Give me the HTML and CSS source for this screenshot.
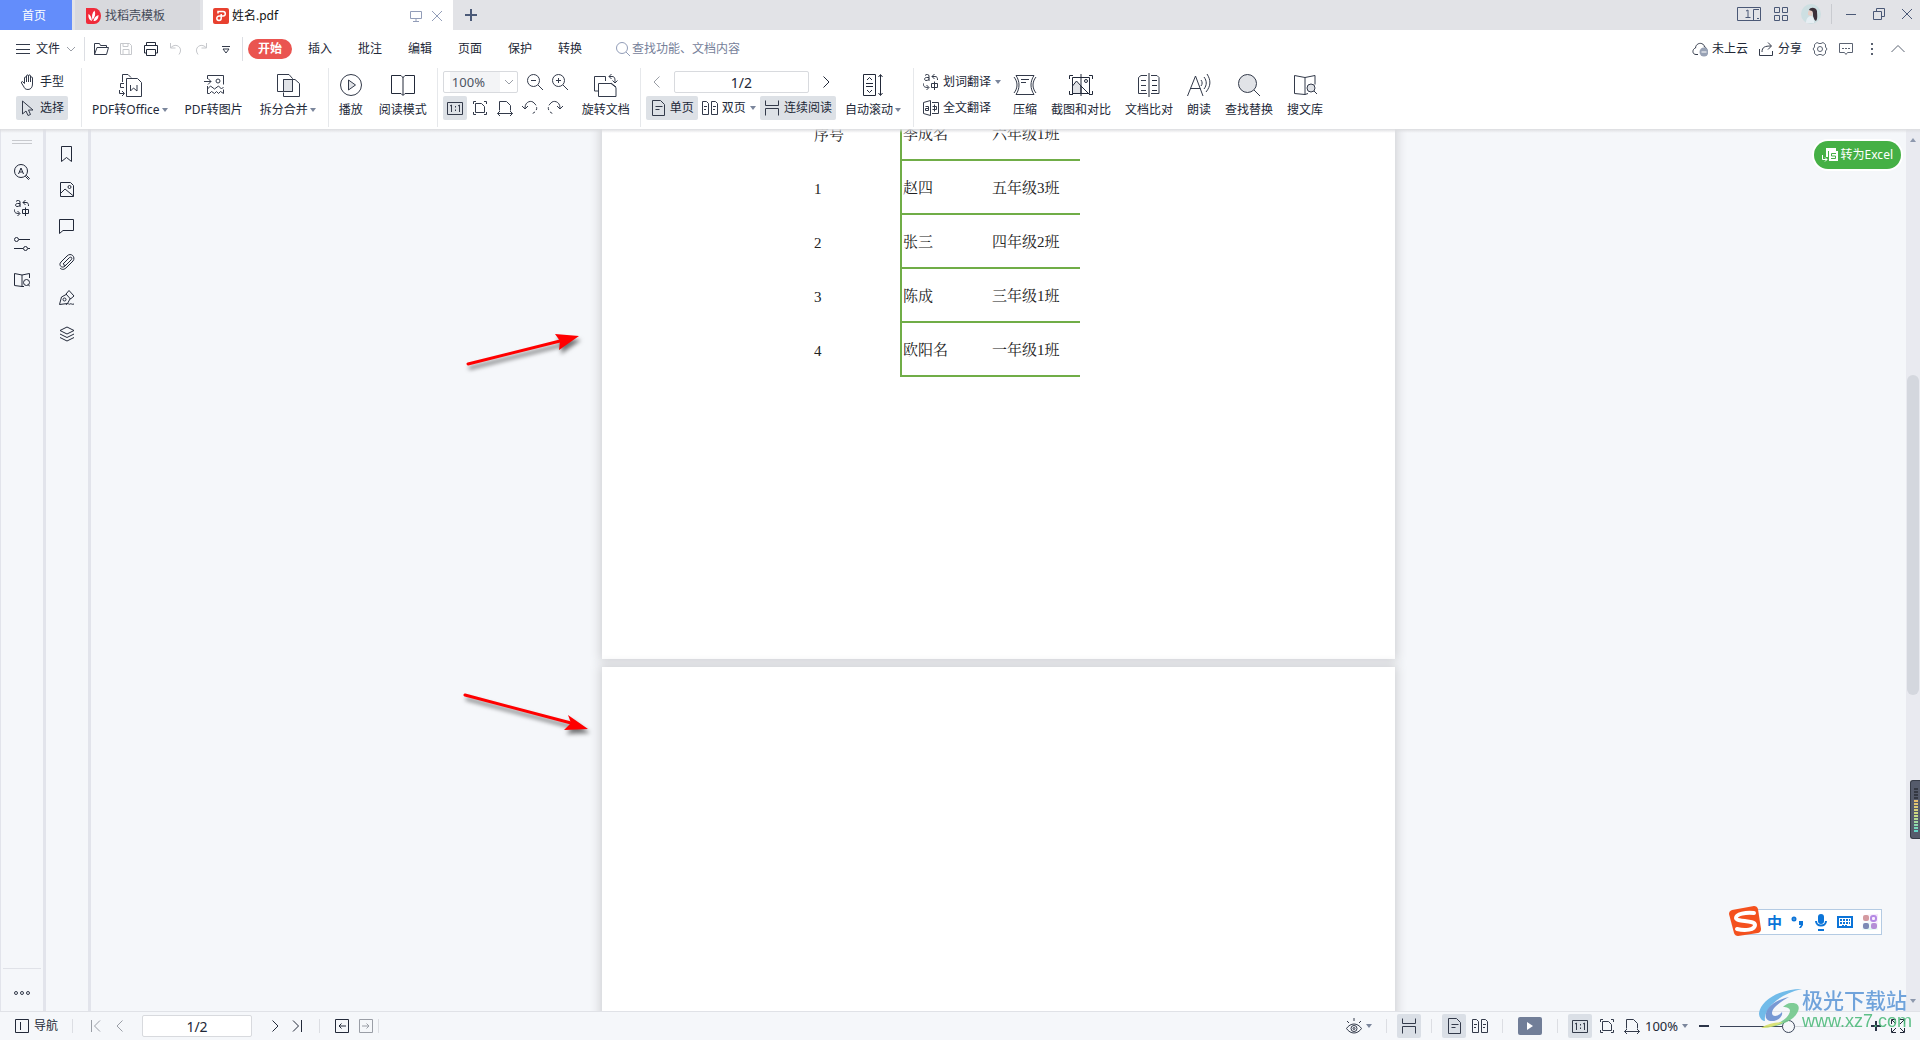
FILE: index.html
```html
<!DOCTYPE html>
<html lang="zh-CN">
<head>
<meta charset="utf-8">
<title>姓名.pdf</title>
<link rel="stylesheet" href="styles.css">
</head>
<body>
<svg class="sprite" aria-hidden="true">
  <symbol id="caret" viewBox="0 0 6 16"><path class="caret-fill" d="M0 6h6L3 10z"/></symbol>
  <symbol id="chev-down" viewBox="0 0 10 16"><path d="M1 6l4 4 4-4"/></symbol>
  <symbol id="chev-left" viewBox="0 0 10 16"><path d="M7.500 2.500L2 8l5.500 5.500"/></symbol>
  <symbol id="chev-right" viewBox="0 0 10 16"><path d="M2.500 2.500L8 8l-5.500 5.500"/></symbol>
  <symbol id="first" viewBox="0 0 10 16"><path d="M.5 2v12M9 2.500L3.500 8 9 13.500"/></symbol>
  <symbol id="last" viewBox="0 0 10 16"><path d="M9.500 2v12M1 2.500L6.500 8 1 13.500"/></symbol>
  <symbol id="one" viewBox="0 0 16 16"><path d="M.5 2.500h15v12H.5zM3 6l1.500-1v7M11 6l1.500-1v7M8.500 6v1.500M8.500 9.500V11"/></symbol>
  <symbol id="fit" viewBox="0 0 16 16"><path d="M1.500 4V1.500H4M12 1.500h2.500V4M14.500 12v2.500H12M4 14.500H1.500V12M3.500 3.500h6l3 3v6h-9z"/></symbol>
  <symbol id="fitw" viewBox="0 0 16 16"><path d="M2.500 10.500v-9h7l4 4v5M.5 13.500h15M3 11l-2.500 2.500L3 16M13 11l2.500 2.500L13 16"/></symbol>
  <symbol id="single" viewBox="0 0 16 16"><path d="M2.500.500h8l4 4v11h-12zM5.500 6.500h7M5.500 9.500h4"/></symbol>
  <symbol id="double" viewBox="0 0 16 16"><path d="M.5 1.500h4l2 2v11h-6zM9.500 1.500h4l2 2v11h-6zM2 6.500h3M2 9.500h2M11 6.500h3M11 9.500h2"/></symbol>
  <symbol id="cont" viewBox="0 0 16 16"><path d="M1.500.500v5h13v-5M1.500 15.500v-7h13v7"/></symbol>
  <symbol id="trans" viewBox="0 0 16 16"><path d="M2 1.500C3 0 6 0 6 2v5M6 3.500H3.500C1 3.500 1 6.500 3 6.500s3-1 3-2M9 2.500h3c2 0 2.500 1 2.500 3.500M11.500 0L9 2.500 11.500 5M.5 9.500v1c0 2 1 3 5 3M3.500 11L6 13.500 3.500 16M8.500 9.500h6v4h-6zM11.500 7.500v8.500"/></symbol>
  <symbol id="book" viewBox="0 0 24 24"><path d="M12 4.500L1.500 2.500v18L12 21.500zM12 4.500l10-2v9M12 21.500l3-1"/><circle class="tint" cx="18" cy="15" r="4"/><path d="M21 18l3 3"/></symbol>
</svg>

<header class="titlebar">
  <nav class="tabs">
    <a class="tab tab-home" href="#">首页</a>
    <a class="tab tab-docer" href="#">
      <svg width="16" height="16" viewBox="0 0 16 16"><path fill="#f02b3a" d="M0 0h8a7 8 0 010 16H2a2 2 0 01-2-2z"/><path fill="#fff" d="M6 13C3 12 2 9 2.500 6 4.500 7 5.500 9 6 13zM6.500 12C5.500 8 6 5 8.500 2.500 10 6 9 9 6.500 12zM7.500 13c.5-3 2-5 5-6 0 4-2 6-5 6z"/></svg>
      <span>找稻壳模板</span>
    </a>
    <a class="tab tab-file" href="#">
      <svg width="16" height="16" viewBox="0 0 16 16"><rect width="16" height="16" rx="2" fill="#e8402f"/><path fill="none" stroke="#fff" stroke-width="1.500" d="M5 5.500V3.500h5a2.300 2.300 0 010 4.600H6a2.200 2.200 0 102.200 2.200V6"/></svg>
      <span>姓名.pdf</span>
      <svg class="ico blue push" width="12" height="16" viewBox="0 0 12 16"><path d="M.5 3.500h11v7H.5zM6 10.500v3M3 13.500h6"/></svg>
      <svg class="ico blue" width="12" height="16" viewBox="0 0 12 16"><path d="M1 3l10 10M11 3L1 13"/></svg>
    </a>
    <button class="plain plus" aria-label="新建"><svg width="12" height="12" viewBox="0 0 12 12"><path stroke="#4b5a78" stroke-width="2" d="M6 0v12M0 6h12"/></svg></button>
  </nav>
  <div class="window-tools">
    <svg class="ico navy" width="24" height="14" viewBox="0 0 24 14"><path d="M.5.500h23v13H.5zM9 4l2-1v8M8.500 10.500h5M22 2.500h-5.500v11M20 11.500h2"/></svg>
    <svg class="ico navy" width="14" height="14" viewBox="0 0 14 14"><path d="M.5.500h5v5h-5zM8.500.500h5v5h-5zM.5 8.500h5v5h-5zM8.500 8.500h5v5h-5z"/></svg>
    <svg width="20" height="20" viewBox="0 0 20 20"><circle cx="10" cy="10" r="10" fill="#cddfe2"/><path fill="#e9cfc6" d="M7 9c0-3 3-4 5-2l-1 5-4-1z"/><path fill="#3a2f38" d="M8 6c1-3 7-3 8 1 0 3 1 8-1 10-2-1-3-4-3-6s0-3-1-4z"/><path fill="#e6eef3" d="M5 19c0-4 2-7 5-7s3 4 3 7z"/></svg>
    <i class="bar"></i>
    <svg class="ico navy" width="12" height="14" viewBox="0 0 12 14"><path d="M1 7.500h10"/></svg>
    <svg class="ico navy" width="12" height="14" viewBox="0 0 12 14"><path d="M.5 4.500h8v8h-8zM3.500 4V1.500h8v8H9"/></svg>
    <svg class="ico navy" width="12" height="14" viewBox="0 0 12 14"><path d="M1 2l10 10M11 2L1 12"/></svg>
  </div>
</header>

<div class="menubar">
  <button class="plain file-menu">
    <svg class="ico" width="14" height="16" viewBox="0 0 14 16"><path d="M0 3.500h14M0 8.500h14M0 12.500h14"/></svg>
    <span>文件</span>
    <svg class="ico gray" width="10" height="16"><use href="#chev-down"/></svg>
  </button>
  <i class="bar"></i>
  <div class="quick">
    <svg class="ico" width="16" height="16" viewBox="0 0 16 16"><path d="M1.500 13.500v-11h5l1 2h6v2M1.500 13.500l2.500-7h11.500l-2 7z"/></svg>
    <svg class="ico off" width="16" height="16" viewBox="0 0 16 16"><path d="M2.500 2.500h9l2 2v9h-11zM5 2.500v3h5v-3M5 13.500v-5h6v5"/></svg>
    <svg class="ico dark" width="16" height="16" viewBox="0 0 16 16"><path d="M3.500 4V1.500h9V4M3.500 12h-2v-7.500h13V12h-2M3.500 8.500h9v6h-9z"/></svg>
    <svg class="ico off" width="16" height="16" viewBox="0 0 16 16"><path d="M2.500 2v5h5M3 6.500C8 1 16 7 11 13.500"/></svg>
    <svg class="ico off" width="16" height="16" viewBox="0 0 16 16"><path d="M13.500 2v5h-5M13 6.500C8 1 0 7 5 13.500"/></svg>
    <svg class="ico" width="16" height="16" viewBox="0 0 16 16"><path d="M4 5.500h8M5 8l3 4 3-4z"/></svg>
  </div>
  <i class="bar"></i>
  <nav class="menu">
    <a class="active" href="#">开始</a><a href="#">插入</a><a href="#">批注</a><a href="#">编辑</a><a href="#">页面</a><a href="#">保护</a><a href="#">转换</a>
  </nav>
  <label class="search">
    <svg class="ico blue" width="16" height="16" viewBox="0 0 16 16"><circle cx="7" cy="7" r="5.500"/><path d="M11 11l4 4"/></svg>
    <input type="text" placeholder="查找功能、文档内容" aria-label="查找功能、文档内容">
  </label>
  <div class="account">
    <button class="plain"><svg class="ico" width="16" height="16" viewBox="0 0 16 16"><path d="M6 13.500H4C0 13.500 0 8 3.500 7 4 1 12 1 12.500 6c1 0 2 1 2 2"/><circle cx="12" cy="11" r="4.500" fill="#98a2b5" stroke="none"/><path stroke="#fff" d="M9.500 11h5"/></svg>未上云</button>
    <button class="plain"><svg class="ico" width="16" height="16" viewBox="0 0 16 16"><path d="M1.500 8v6.500h13V10M4 11c0-5 3-6 9-6M10 1.500L13.500 5 10 8.500"/></svg>分享</button>
    <svg class="ico mid" width="16" height="16" viewBox="0 0 16 16"><path d="M5 1.500l2 1h2l2-1 2.500 2V6L15 8l-1.500 2v2.500l-2.500 2-2-1H7l-2 1-2.500-2V10L1 8l1.500-2V3.500z"/><circle cx="8" cy="8" r="2.500"/></svg>
    <svg class="ico mid" width="16" height="16" viewBox="0 0 16 16"><path d="M1.500 2.500h13v9h-5l-1.500 2-1.500-2h-5zM4 7.500h2M7 7.500h2M10 7.500h2"/></svg>
    <svg width="16" height="16" viewBox="0 0 16 16"><path fill="#596170" d="M7 2h2v2H7zM7 7h2v2H7zM7 12h2v2H7z"/></svg>
    <svg class="ico mid" width="16" height="16" viewBox="0 0 16 16"><path d="M1.500 11L8 4.500l6.500 6.500"/></svg>
  </div>
</div>

<div class="ribbon">
  <section class="group g-tools">
    <div class="stack">
      <button class="small"><svg class="ico" width="16" height="16" viewBox="0 0 16 16"><path d="M4.500 9.500V4c0-1.500 2-1.500 2 0V2c0-1.500 2-1.500 2 0v0c0-1.500 2-1.500 2 0v2c0-1.500 2-1.500 2 0v6c0 3-1.500 5.500-4.500 5.500S4.500 14 4 13L1.500 9c-.5-1.500 1-2 1.500-1zM6.500 4v4M8.500 2v6M10.500 4v4"/></svg>手型</button>
      <button class="small on"><svg class="ico" width="16" height="16" viewBox="0 0 16 16"><path d="M2.500 1v13l3.500-3 2 4.500 2.500-1-2-4.500H13z"/></svg>选择</button>
    </div>
  </section>
  <section class="group g-convert">
    <button class="big"><svg class="ico" width="24" height="24" viewBox="0 0 24 24"><path d="M4.500 9V1.500H10l3 3M8.500 5.500v18h15v-14l-4-4zM12.500 12v6l3-3 3.500 3v-6M6 10.500H2.500v4H6M1.500 17v3.500H6M4 18l2.500 2.500L4 23"/></svg><span>PDF转Office<svg class="ico" width="6" height="16"><use href="#caret"/></svg></span></button>
    <button class="big"><svg class="ico" width="24" height="24" viewBox="0 0 24 24"><path d="M5.500 6V2.500h16v9M5.500 13v7.500h2l2-2 3 2 2-2 2 2 2-2 3 2v-4M5.500 16l3-3 4 3 4-3 3 3 2-2M2 8.500h7M6 5.500l3 3-3 3"/><circle cx="16" cy="8" r="2"/></svg><span>PDF转图片</span></button>
    <button class="big"><svg class="ico" width="24" height="24" viewBox="0 0 24 24"><path d="M7.500 18.500h-6v-17H13l3.500 4v13h-9v-12H19l4.500 4v13h-16v-4"/><path class="tint" d="M7.500 6.500h9v12h-9z"/></svg><span>拆分合并<svg class="ico" width="6" height="16"><use href="#caret"/></svg></span></button>
  </section>
  <section class="group g-view">
    <button class="big"><svg class="ico" width="24" height="24" viewBox="0 0 24 24"><circle cx="12" cy="12" r="10.500"/><path class="tint" d="M9.500 7v10l7-5z"/></svg><span>播放</span></button>
    <button class="big"><svg class="ico dark" width="24" height="24" viewBox="0 0 24 24"><path d="M.5 2.500H10l2 2 2-2h9.500v18H14l-2 2-2-2H.5zM12 4v18"/></svg><span>阅读模式</span></button>
  </section>
  <section class="group g-zoom">
    <div class="stack">
      <div class="row zoom-row">
        <span class="zoom-pick"><select aria-label="缩放比例"><option>100%</option></select><svg class="ico gray" width="10" height="16"><use href="#chev-down"/></svg></span>
        <svg class="ico" width="16" height="16" viewBox="0 0 16 16"><circle cx="6.500" cy="6.500" r="6"/><path d="M11 11l5 5M4 6.500h5"/></svg>
        <svg class="ico" width="16" height="16" viewBox="0 0 16 16"><circle cx="6.500" cy="6.500" r="6"/><path d="M11 11l5 5M4 6.500h5M6.500 4v5"/></svg>
      </div>
      <div class="row zoom-row">
        <button class="small on" aria-label="实际大小"><svg class="ico" width="16" height="16"><use href="#one"/></svg></button>
        <svg class="ico" width="16" height="16"><use href="#fit"/></svg>
        <svg class="ico" width="16" height="16"><use href="#fitw"/></svg>
        <svg class="ico" width="16" height="16" viewBox="0 0 16 16"><path d="M0 6l3 3 3-3M3 8c0-7 7-8 9-5"/><path stroke-dasharray="3 2" d="M12 3c4 3 4 9-3 11"/></svg>
        <svg class="ico" width="16" height="16" viewBox="0 0 16 16"><path d="M16 6l-3 3-3-3M13 8c0-7-7-8-9-5"/><path stroke-dasharray="3 2" d="M4 3c-4 3-4 9 3 11"/></svg>
      </div>
    </div>
    <button class="big"><svg class="ico" width="24" height="24" viewBox="0 0 24 24"><path d="M4.500 18H.5V3.500h11M4.500 23.500v-13H17l5 4v9zM17 10l5 4M11.500 8V3.500M15 3.500h3c3 0 3 2 3 6M17.500 1L15 3.500 17.500 6M18.500 7.500L21 10l2.500-2.500"/></svg><span>旋转文档</span></button>
  </section>
  <section class="group g-page">
    <div class="stack">
      <div class="row page-row">
        <svg class="ico gray" width="10" height="16"><use href="#chev-left"/></svg>
        <input class="page-input" type="text" value="1/2" aria-label="页码">
        <svg class="ico dark" width="10" height="16"><use href="#chev-right"/></svg>
      </div>
      <div class="row">
        <button class="small on"><svg class="ico" width="16" height="16"><use href="#single"/></svg>单页</button>
        <button class="small flat"><svg class="ico" width="16" height="16"><use href="#double"/></svg>双页<svg class="ico" width="6" height="16"><use href="#caret"/></svg></button>
        <button class="small on"><svg class="ico" width="16" height="16"><use href="#cont"/></svg>连续阅读</button>
      </div>
    </div>
    <button class="big"><svg class="ico dark" width="24" height="24" viewBox="0 0 24 24"><path d="M2.500 1.500h12v21h-12zM6 7l2.500-2.500L11 7M6 17l2.500 2.500L11 17M5 10.500h7M5 13.500h7M19.500 2v20M17.500 4l2-2.500 2 2.500M17.500 20l2 2.500 2-2.500"/></svg><span>自动滚动<svg class="ico" width="6" height="16"><use href="#caret"/></svg></span></button>
  </section>
  <section class="group g-text">
    <div class="stack">
      <button class="small flat"><svg class="ico" width="16" height="16"><use href="#trans"/></svg>划词翻译<svg class="ico" width="6" height="16"><use href="#caret"/></svg></button>
      <button class="small flat"><svg class="ico" width="16" height="16" viewBox="0 0 16 16"><path d="M.5 2.500l7-2v15l-7-2zM9 2.500h6.500v11H9M2.500 6.500h3v4h-3v-2h3M9.500 6.500h4v3h-4M11.500 4.500v7"/></svg>全文翻译</button>
    </div>
    <button class="big"><svg class="ico" width="24" height="24" viewBox="0 0 24 24"><path d="M3 2.500h18c-4 6-4 13 0 19H3c4-6 4-13 0-19zM1 4c4 5 4 11 0 16M23 4c-4 5-4 11 0 16M8 6.500h8M8 9.500h5"/></svg><span>压缩</span></button>
    <button class="big"><svg class="ico dark" width="24" height="24" viewBox="0 0 24 24"><path class="tint" d="M3.500 13l4-5L12 13v7.500H3.500z"/><path d="M.5 6V2.500H4M20 2.500h3.500V6M23.500 18v3.500H20M4 21.500H.5V18M3.500 4.500h17v16h-17zM12 1v22M12 13l7 7"/><circle cx="17" cy="8" r="1.500"/></svg><span>截图和对比</span></button>
    <button class="big"><svg class="ico" width="24" height="24" viewBox="0 0 24 24"><path d="M10 2.500H4l-2.500 2v16H10M14 2.500h6l2 2v16h-8M4 7.500h5M4 12.500h5M4 17.500h5"/><path class="dark" d="M12 0v24M15 7.500h5M15 12.500h5M15 17.500h5"/></svg><span>文档比对</span></button>
    <button class="big"><svg class="ico" width="24" height="24" viewBox="0 0 24 24"><path d="M.5 23L8.500 3 16 23M3 15.500h10.500M14 7c1.500 2 1.500 4 0 6M17 4c3 4 3 8 0 12M20 1c4 6 4 12-1 18"/></svg><span>朗读</span></button>
    <button class="big"><svg class="ico" width="24" height="24" viewBox="0 0 24 24"><circle class="tint" cx="10.500" cy="10.500" r="9"/><path d="M17 17l6 6"/></svg><span>查找替换</span></button>
    <button class="big"><svg class="ico" width="24" height="24"><use href="#book"/></svg><span>搜文库</span></button>
  </section>
</div>

<main class="workspace">
  <aside class="rail rail-tools">
    <i class="grip"></i>
    <svg class="ico dark" width="16" height="16" viewBox="0 0 16 16"><circle cx="7" cy="7" r="6.500"/><path d="M4.500 10L7 4l2.500 6M5.500 8h3M11.500 12.500l1-1 3 3-1 1z"/></svg>
    <svg class="ico dark" width="16" height="16"><use href="#trans"/></svg>
    <svg class="ico dark" width="16" height="16" viewBox="0 0 16 16"><circle cx="2.500" cy="3.500" r="2"/><circle cx="11.500" cy="12.500" r="2"/><path d="M5 3.500h11M0 12.500h9M14 12.500h2"/></svg>
    <svg class="ico dark" width="16" height="16" viewBox="0 0 16 16"><path d="M8 3L.5 1.500v12L8 14.500zM8 3l7.500-1.500V6M8 14.500h2"/><circle cx="12.500" cy="10.500" r="3"/><path d="M14 12.500l2 2"/></svg>
    <div class="more"><svg class="ico" width="16" height="16" viewBox="0 0 16 16"><circle cx="2" cy="8" r="1.500"/><circle cx="8" cy="8" r="1.500"/><circle cx="14" cy="8" r="1.500"/></svg></div>
  </aside>
  <aside class="rail rail-panels">
    <svg class="ico dark" width="16" height="16" viewBox="0 0 16 16"><path d="M2.500.500h10v15l-5-4-5 4z"/></svg>
    <svg class="ico dark" width="16" height="16" viewBox="0 0 16 16"><path d="M1.500.500h10l3 3v11h-13zM2 11l4-4 8.500 7"/><circle cx="10.500" cy="5" r="1.500"/></svg>
    <svg class="ico dark" width="16" height="16" viewBox="0 0 16 16"><path d="M.5 1.500h14v11H4l-3.500 3z"/></svg>
    <svg class="ico dark" width="16" height="16" viewBox="0 0 16 16"><path d="M4 10l6-6c2-2 4 0 2 2l-6 6c-3 3-7-1-4-4l6-6c4-4 9 1 6 5l-6 6c-3 3-5 3-7 1M5 10c-1 2 1 2 2 1l5-5"/></svg>
    <svg class="ico dark" width="16" height="16" viewBox="0 0 16 16"><path d="M7 4l3-3.500L15 6l-3.500 3zM8 4L2.500 7l-2 7.500 8-1L11.500 8"/><circle cx="5.500" cy="9.500" r="1.500"/><path d="M7 15c2-3 3 0 4-1s2 1 4 0"/></svg>
    <svg class="ico dark" width="16" height="16" viewBox="0 0 16 16"><path d="M8 1l7 3.500L8 8 1 4.500zM1 8l7 3.500L15 8M1 11.500L8 15l7-3.500"/></svg>
  </aside>
  <div class="canvas">
    <article class="sheet sheet-first">
      <table class="roster">
        <tr><td>序号</td><td>李成名</td><td>六年级1班</td></tr>
        <tr><td>1</td><td>赵四</td><td>五年级3班</td></tr>
        <tr><td>2</td><td>张三</td><td>四年级2班</td></tr>
        <tr><td>3</td><td>陈成</td><td>三年级1班</td></tr>
        <tr><td>4</td><td>欧阳名</td><td>一年级1班</td></tr>
      </table>
    </article>
    <article class="sheet sheet-second"></article>
    <svg class="pointer pointer-top" width="130" height="50" viewBox="0 0 130 50"><path stroke="#f00" stroke-width="3" stroke-linecap="round" d="M8 38L100 15"/><path fill="#f00" d="M119 10L95 8l5 7-1 9z"/></svg>
    <svg class="pointer pointer-low" width="140" height="50" viewBox="0 0 140 50"><path stroke="#f00" stroke-width="3" stroke-linecap="round" d="M5 6l106 28"/><path fill="#f00" d="M128 40l-20-14 3 8-7 7z"/></svg>
    <button class="excel"><svg width="16" height="16" viewBox="0 0 16 16"><path fill="#fff" d="M4 1h10v3H6v6H4z"/><path fill="none" stroke="#fff" stroke-width="1" d="M.5 8v4.500H5M3 10.500l2 2-2 2"/><path fill="#fff" d="M7 4h9v10H7z"/><path fill="none" stroke="#45b045" stroke-width="1" d="M14 6.500H9.500v2.500h4v2.500H9"/></svg>转为Excel</button>
  </div>
  <div class="scrollbar">
    <svg width="6" height="4" viewBox="0 0 6 4"><path fill="#8d98ad" d="M0 4h6L3 0z"/></svg>
    <i class="thumb"></i>
    <svg class="down" width="6" height="4" viewBox="0 0 6 4"><path fill="#8d98ad" d="M0 0h6L3 4z"/></svg>
  </div>
</main>

<footer class="statusbar">
  <button class="plain nav-toggle"><svg class="ico dark" width="16" height="16" viewBox="0 0 16 16"><path d="M1.500 1.500h13v13h-13zM6.500 4v8"/></svg>导航</button>
  <i class="bar"></i>
  <div class="pager">
    <svg class="ico gray" width="10" height="16"><use href="#first"/></svg>
    <svg class="ico gray" width="10" height="16"><use href="#chev-left"/></svg>
    <input class="page-input" type="text" value="1/2" aria-label="当前页">
    <svg class="ico dark" width="10" height="16"><use href="#chev-right"/></svg>
    <svg class="ico dark" width="10" height="16"><use href="#last"/></svg>
  </div>
  <i class="bar"></i>
  <div class="history">
    <svg class="ico dark" width="16" height="16" viewBox="0 0 16 16"><path d="M1.500 1.500h13v13h-13zM5 8h7M7.500 5.500L5 8l2.500 2.500"/></svg>
    <svg class="ico gray" width="16" height="16" viewBox="0 0 16 16"><path d="M1.500 1.500h13v13h-13zM4 8h7M8.500 5.500L11 8l-2.500 2.500"/></svg>
  </div>
  <i class="bar"></i>
  <div class="view-tools">
    <button class="plain eye"><svg class="ico" width="16" height="16" viewBox="0 0 16 16"><path d="M.5 10.500c4-6 11-6 15 0-4 6-11 6-15 0zM8 0v3M1 3l2 2M15 3l-2 2"/><circle cx="8" cy="10.500" r="3"/><circle cx="8" cy="10.500" r="1"/></svg><svg class="ico" width="6" height="16"><use href="#caret"/></svg></button>
    <i class="bar"></i>
    <button class="small on" aria-label="连续阅读"><svg class="ico" width="16" height="16"><use href="#cont"/></svg></button>
    <i class="bar"></i>
    <div class="pair"><button class="small on" aria-label="单页"><svg class="ico" width="16" height="16"><use href="#single"/></svg></button><svg class="ico" width="16" height="16"><use href="#double"/></svg></div>
    <i class="bar"></i>
    <button class="play" aria-label="播放"><svg width="8" height="8" viewBox="0 0 8 8"><path fill="#fff" d="M1 0v8l6-4z"/></svg></button>
    <i class="bar"></i>
    <button class="small on" aria-label="实际大小"><svg class="ico" width="16" height="16"><use href="#one"/></svg></button>
  </div>
  <div class="zoom-tools">
    <svg class="ico" width="16" height="16"><use href="#fit"/></svg>
    <svg class="ico" width="16" height="16"><use href="#fitw"/></svg>
    <span class="zoom-level"><select aria-label="缩放"><option>100%</option></select><svg class="ico" width="6" height="16"><use href="#caret"/></svg></span>
    <svg width="10" height="16" viewBox="0 0 10 16"><path stroke="#2b3448" stroke-width="2" d="M0 8h10"/></svg>
    <input class="slider" type="range" min="0" max="100" value="49" aria-label="缩放滑块">
    <svg width="10" height="16" viewBox="0 0 10 16"><path stroke="#2b3448" stroke-width="2" d="M0 8h10M5 3v10"/></svg>
    <svg class="ico dark" width="16" height="16" viewBox="0 0 16 16"><path d="M1.500 6V1.500H6M10 1.500h4.500V6M14.500 10v4.500H10M6 14.500H1.500V10M2 2l4 4M14 2l-4 4M2 14l4-4M14 14l-4-4"/></svg>
  </div>
</footer>

<i class="gauge"></i>

<div class="ime">
  <svg class="ime-logo" width="32" height="32" viewBox="0 0 32 32"><path fill="#f4511e" d="M3 5L25 1q3 0 4 3l3 20q0 3-3 4L9 31q-3 0-4-3L0 9q0-3 3-4z"/><path fill="none" stroke="#fff" stroke-width="4" stroke-linecap="round" d="M25 8C17 7 7 9 7 13s19 2 19 7-10 6-18 4"/></svg>
  <b>中</b>
  <svg width="14" height="16" viewBox="0 0 14 16"><circle cx="3" cy="5" r="1.500" fill="none" stroke="#0b74d8" stroke-width="2"/><path fill="#0b74d8" d="M8 7h4v4l-2 3H8l2-3H8z"/></svg>
  <svg width="14" height="18" viewBox="0 0 14 18"><rect x="4" y="1" width="6" height="10" rx="3" fill="#0b74d8"/><path fill="none" stroke="#0b74d8" stroke-width="2" d="M2 8c0 6 10 6 10 0M4 17h6"/></svg>
  <svg width="16" height="14" viewBox="0 0 16 14"><rect x="1" y="2" width="14" height="10" fill="none" stroke="#0b74d8" stroke-width="2"/><path stroke="#0b74d8" stroke-width="2" stroke-dasharray="2 1" d="M3 5h10M3 8h10M5 11h6"/></svg>
  <svg class="apps" width="16" height="16" viewBox="0 0 16 16"><rect x="1" y="1" width="6" height="6" rx="2" fill="#d49aa0"/><rect x="9" y="2" width="5" height="5" rx="2" fill="none" stroke="#b58ae4" stroke-width="2"/><rect x="1" y="9" width="6" height="6" rx="2" fill="#7d8bb5"/><rect x="9" y="9" width="6" height="6" rx="2" fill="#b58fd6"/></svg>
</div>

<div class="brand">
  <svg width="44" height="42" viewBox="0 0 44 42"><path fill="#63b5e8" d="M44 1C20 1 3 13 1 25c0 5 3 8 6 8-2-12 14-27 37-32z"/><path fill="#6a8fd0" d="M31 9C13 13 6 23 8 30c4 7 18 1 16-6-4 5-10 5-10 1 0-6 10-12 17-16z"/><path fill="#72c88c" d="M33 15c10-1 10 8 2 15-7 6-18 9-31 10 17-3 27-10 28-17 0-3-3-4-7-4 2-2 5-4 8-4z"/><path fill="#d7e06a" d="M3 40c8-5 13-5 22-6-6 4-14 6-22 6z"/></svg>
  <div><strong>极光下载站</strong><span>www.xz7.com</span></div>
</div>
</body>
</html>
```

FILE: styles.css
```css
* { box-sizing: border-box; }

body {
  margin: 0;
  height: 100vh;
  display: flex;
  flex-direction: column;
  overflow: hidden;
  position: relative;
  background: #fff;
  color: #222837;
  font: 12px/16px "Noto Sans", "Noto Sans CJK SC", sans-serif;
}

button, input, select { font: inherit; color: inherit; margin: 0; }
button { border: 0; padding: 0; background: none; white-space: nowrap; }
a { color: inherit; text-decoration: none; white-space: nowrap; }
svg { flex: none; display: block; }

.sprite { position: absolute; width: 0; height: 0; }
.ico { fill: none; stroke: #333a4a; }
.ico.dark, .dark { stroke: #222939; }
.ico.mid { stroke: #5b6372; }
.ico.gray { stroke: #9a9ea6; }
.ico.off { stroke: #c6c8cc; }
.ico.blue { stroke: #929db8; }
.ico.navy { stroke: #4a5876; }
.caret-fill { fill: #7b869c; stroke: none; }
.tint { fill: #e1e3e7; }
.bar { flex: none; width: 1px; height: 24px; background: #dcdee3; }
.plain { display: flex; align-items: center; }

/* Title bar */
.titlebar { flex: none; height: 30px; display: flex; justify-content: space-between; background: #e2e3e7; }
.tabs { display: flex; gap: 3px; }
.tab { display: flex; align-items: center; height: 30px; padding-top: 2px; }
.tab-home { width: 72px; padding-left: 22px; background: #638dfb; color: #fff; }
.tab-docer { width: 125px; padding-left: 11px; gap: 3px; background: #d8d9dd; color: #454b59; }
.tab-file { width: 250px; padding: 2px 10px 0; gap: 3px; background: #fff; color: #111; }
.tab-file .push { margin-left: auto; margin-right: 6px; }
.plus { padding-left: 9px; }
.window-tools { display: flex; align-items: center; gap: 13px; padding: 0 7px 2px 0; }
.window-tools .bar { height: 20px; margin: 0 -3px; background: #c9cbd0; }
.window-tools .bar ~ svg { margin-left: 3px; }

/* Menu bar */
.menubar { flex: none; height: 38px; display: flex; align-items: center; padding: 0 14px 0 16px; }
.file-menu { gap: 6px; margin-right: 8px; }
.quick { display: flex; gap: 9px; padding: 0 8px; }
.menu { display: flex; align-items: center; padding-left: 5px; }
.menu a { width: 50px; text-align: center; }
.menu .active { width: 44px; height: 20px; margin-right: 3px; line-height: 20px; border-radius: 10px; background: #ea5450; color: #fff; font-weight: 600; }
.search { display: flex; align-items: center; flex: 1; padding-left: 20px; }
.search input { flex: 1; min-width: 0; max-width: 200px; border: 0; padding: 0; background: none; outline: 0; margin-left: 1px; }
.search input::placeholder { color: #76819a; opacity: 1; }
.account { display: flex; align-items: center; gap: 10px; }
.account .plain { gap: 4px; }

/* Ribbon */
.ribbon { flex: none; height: 61px; display: flex; }
.group { display: flex; height: 59px; border-right: 1px solid #e6e8eb; }
.g-tools { padding: 0 13px 0 16px; }
.g-convert { padding: 0 12px 0 10px; gap: 17px; }
.g-view { padding: 0 10px; gap: 16px; }
.g-zoom { padding: 0 10px 0 5px; gap: 14px; }
.g-page { padding: 0 12px 0 5px; gap: 9px; }
.g-text { padding-left: 9px; gap: 14px; border-right: 0; }
.g-text .stack { margin-right: -2px; }
.stack { display: flex; flex-direction: column; gap: 2px; padding-top: 2px; }
.row { display: flex; align-items: center; gap: 4px; height: 24px; }
.zoom-row { gap: 9px; }
.zoom-row .small { margin-right: -4px; }
.page-row { gap: 12px; padding-left: 6px; }
.small { display: flex; align-items: center; gap: 4px; height: 24px; padding: 0 4px; border-radius: 2px; }
.small.on { background: #dde1e6; }
.small.flat { padding: 0; }
.big { display: flex; flex-direction: column; align-items: center; gap: 5px; padding-top: 5px; height: 50px; }
.big span { display: flex; gap: 2px; }
.zoom-pick { position: relative; width: 75px; height: 22px; }
.zoom-pick select { appearance: none; width: 75px; height: 22px; padding: 0 0 0 8px; border: 1px solid #d8dade; border-radius: 2px; background: linear-gradient(#f3f4f6, #f3f4f6) 6px 0 / 50px 22px no-repeat #fff; color: #4d5463; font-size: 13px; }
.zoom-pick svg { position: absolute; right: 4px; top: 3px; pointer-events: none; }
.page-input { width: 135px; height: 22px; border: 1px solid #d8dade; border-radius: 2px; padding: 0; text-align: center; background: #fff; font-size: 14px; }

/* Workspace */
.workspace { flex: 1; min-height: 0; display: flex; background: #f5f7fa; position: relative; }
.workspace::before { content: ""; position: absolute; z-index: 2; inset: 0 0 auto 0; height: 4px; background: linear-gradient(#dcdde0, #f5f7fa00); }
.rail { flex: none; display: flex; flex-direction: column; align-items: center; gap: 20px; border-right: 3px solid #e2e4eb; }
.rail-tools { width: 46px; border-left: 1px solid #e2e4eb; padding-top: 11px; }
.grip { width: 20px; height: 4px; border: solid #c8cace; border-width: 1px 0; }
.rail-panels { width: 45px; padding-top: 17px; }
.more { width: 38px; height: 43px; margin-top: auto; padding: 16px 11px 0; border-top: 1px solid #e0e2e8; }
.canvas { flex: 1; min-width: 0; position: relative; overflow: hidden; display: flex; flex-direction: column; align-items: center; gap: 8px; }
.sheet { flex: none; width: 793px; background: #fff; box-shadow: 0 0 10px 2px #cfd0d3; }
.sheet-first { height: 552px; margin-top: -22px; padding-left: 210px; }
.sheet-second { height: 1122px; }
.roster { border-collapse: separate; border-spacing: 0; table-layout: fixed; width: 268px; color: #222; font: 15px/20px "Liberation Serif", "Noto Serif CJK SC", "Noto Sans CJK SC", serif; }
.roster td { height: 54px; padding: 2px 0 0 2px; width: 90px; }
.roster td:first-child { width: 88px; }
.roster td + td { border-bottom: 2px solid #70ad47; }
.roster td:nth-child(2) { border-left: 2px solid #70ad47; padding-left: 1px; }
.pointer { position: absolute; fill: none; filter: drop-shadow(2px 4px 2px #0008); }
.pointer-top { left: 369px; top: 197px; }
.pointer-low { left: 369px; top: 560px; }
.excel { position: absolute; right: 5px; top: 12px; display: flex; align-items: center; gap: 3px; height: 28px; padding: 0 8px; border-radius: 14px; background: #45b045; box-shadow: 0 0 0 2px #fff; color: #fff; }
.scrollbar { flex: none; width: 14px; display: flex; flex-direction: column; align-items: center; padding: 9px 0 8px; background: #e9eaf0; }
.thumb { width: 12px; height: 37%; margin-top: 233px; border-radius: 6px; background: #d4d7de; }
.scrollbar .down { margin-top: auto; }

/* Status bar */
.statusbar { flex: none; height: 29px; display: flex; align-items: center; padding: 0 14px; border-top: 1px solid #e0e2e7; background: #f5f7fa; }
.statusbar .bar { height: 14px; }
.nav-toggle { gap: 4px; margin-right: 14px; }
.pager { display: flex; align-items: center; gap: 14px; padding: 0 17px 0 18px; }
.pager .page-input { width: 110px; margin: 0 4px 0 3px; }
.pager svg:last-child { margin-left: -2px; }
.history { display: flex; gap: 8px; padding: 0 4px 0 14px; }
.view-tools { display: flex; align-items: center; gap: 10px; margin-left: auto; }
.statusbar .on { background: #dadfe6; }
.eye { gap: 4px; margin-right: 4px; }
.pair { display: flex; align-items: center; gap: 6px; margin-right: 4px; }
.play { display: flex; align-items: center; justify-content: center; width: 24px; height: 18px; margin: 0 5px; border-radius: 2px; background: #717e98; }
.zoom-tools { display: flex; align-items: center; gap: 9px; margin-left: 7px; }
.zoom-level { display: flex; align-items: center; gap: 3px; margin: 0 2px 0 -4px; }
.zoom-level select { appearance: none; width: 34px; padding: 0; border: 0; background: none; font-size: 13px; }
.slider { appearance: none; width: 140px; height: 14px; margin: 0 2px; background: linear-gradient(#3b4559, #3b4559) 0 7px / 63px 1px no-repeat, linear-gradient(#d4d7dd, #d4d7dd) 63px 7px / 77px 1px no-repeat; }
.slider::-webkit-slider-thumb { appearance: none; width: 13px; height: 13px; border: 1px solid #3b4559; border-radius: 50%; background: #f5f7fa; }

/* Floating widgets */
.gauge { position: absolute; right: 0; top: 780px; width: 10px; height: 59px; border: 1px solid #363b46; border-right: 0; border-radius: 3px 0 0 3px; background: repeating-linear-gradient(#0000 0 2px, #555b6b 2px 3px) 3px 7px / 4px 45px no-repeat, linear-gradient(#343842 0 12px, #e9bd6b 12px, #c9dd85 28px, #58d4cf 45px) 3px 7px / 4px 45px no-repeat, #555b6b; }
.ime { position: absolute; right: 38px; bottom: 105px; display: flex; align-items: center; gap: 9px; width: 140px; height: 26px; padding-left: 24px; border: 1px solid #b4cbe3; background: #fff; color: #0b74d8; }
.ime b { font-size: 15px; line-height: 20px; }
.ime-logo { position: absolute; left: -14px; top: -5px; }
.apps { background: radial-gradient(circle at 100% 0, #f6e3fb, #fff0 60%), radial-gradient(circle at 50% 100%, #dff7f3, #fff0 70%); }
.brand { position: absolute; right: 8px; bottom: 9px; display: flex; align-items: center; pointer-events: none; opacity: .9; }
.brand div { display: flex; flex-direction: column; }
.brand strong { font: 500 21px/24px "Noto Sans CJK SC", sans-serif; color: #629bd8; }
.brand span { font: 18px/20px "Liberation Sans", sans-serif; color: #4fbb7c; }
```
